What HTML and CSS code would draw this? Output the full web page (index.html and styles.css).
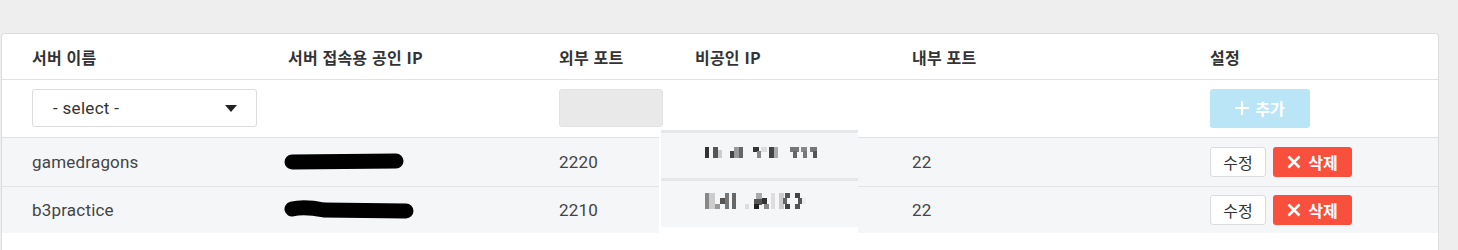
FILE: index.html
```html
<!DOCTYPE html>
<html lang="ko">
<head>
    <meta charset="UTF-8">
    <title>서버 목록</title>
    <link rel="stylesheet" href="styles.css">
</head>
<body>
    <div class="server-card">
        <div class="row head-row">
            <div>서버 이름</div>
            <div>서버 접속용 공인 IP</div>
            <div>외부 포트</div>
            <div>비공인 IP</div>
            <div>내부 포트</div>
            <div>설정</div>
        </div>

        <div class="row filter-row">
            <div>
                <div class="select-box">
                    <span>- select -</span>
                    <span class="caret"></span>
                </div>
            </div>
            <div></div>
            <div><div class="port-input"></div></div>
            <div></div>
            <div></div>
            <div>
                <button class="add-btn">
                    <svg width="14" height="14" viewBox="0 0 14 14"><path d="M7 0v14M0 7h14" stroke="#fff" stroke-width="2.2"/></svg>
                    추가
                </button>
            </div>
        </div>

        <div class="row data-row">
            <div>gamedragons</div>
            <div>
                <svg class="redact" width="124" height="20" viewBox="0 0 124 20"><path d="M8 10 L112 9" stroke="#000" stroke-width="15" stroke-linecap="round"/></svg>
            </div>
            <div>2220</div>
            <div></div>
            <div>22</div>
            <div class="actions">
                <button class="edit-btn">수정</button>
                <button class="del-btn">
                    <svg width="14" height="14" viewBox="0 0 14 14"><path d="M1.5 1.5l11 11M12.5 1.5l-11 11" stroke="#fff" stroke-width="2.6"/></svg>
                    삭제
                </button>
            </div>
        </div>

        <div class="row data-row last">
            <div>b3practice</div>
            <div>
                <svg class="redact" width="132" height="22" viewBox="0 0 132 22"><path d="M8 10 Q20 7 40 11 L122 12" stroke="#000" stroke-width="15" stroke-linecap="round" fill="none"/></svg>
            </div>
            <div>2210</div>
            <div></div>
            <div>22</div>
            <div class="actions">
                <button class="edit-btn">수정</button>
                <button class="del-btn">
                    <svg width="14" height="14" viewBox="0 0 14 14"><path d="M1.5 1.5l11 11M12.5 1.5l-11 11" stroke="#fff" stroke-width="2.6"/></svg>
                    삭제
                </button>
            </div>
        </div>

        <!-- 비공인 IP 가림 이미지 -->
        <div class="mask">
            <div class="mask-line"></div>
            <div class="mask-row">
                <svg width="120" height="14" viewBox="0 0 120 14">
                    <rect x="0" y="1" width="4" height="11" fill="#333"/>
                    <rect x="8" y="1" width="5" height="11" fill="#555"/>
                    <rect x="13" y="4" width="4" height="8" fill="#ccc"/>
                    <rect x="25" y="5" width="4" height="7" fill="#444"/>
                    <rect x="29" y="1" width="5" height="11" fill="#999"/>
                    <rect x="34" y="1" width="4" height="11" fill="#666"/>
                    <rect x="48" y="1" width="6" height="5" fill="#333"/>
                    <rect x="52" y="5" width="4" height="7" fill="#888"/>
                    <rect x="56" y="1" width="6" height="5" fill="#ddd"/>
                    <rect x="64" y="1" width="5" height="11" fill="#444"/>
                    <rect x="69" y="1" width="4" height="11" fill="#aaa"/>
                    <rect x="85" y="1" width="9" height="5" fill="#777"/>
                    <rect x="88" y="5" width="4" height="7" fill="#666"/>
                    <rect x="96" y="1" width="6" height="5" fill="#888"/>
                    <rect x="98" y="5" width="4" height="7" fill="#777"/>
                    <rect x="105" y="1" width="7" height="5" fill="#777"/>
                    <rect x="108" y="5" width="4" height="7" fill="#555"/>
                </svg>
            </div>
            <div class="mask-line"></div>
            <div class="mask-row">
                <svg width="120" height="18" viewBox="0 0 120 18">
                    <rect x="0" y="1" width="4" height="16" fill="#888"/>
                    <rect x="4" y="1" width="6" height="16" fill="#ccc"/>
                    <rect x="10" y="12" width="5" height="5" fill="#999"/>
                    <rect x="15" y="6" width="5" height="6" fill="#555"/>
                    <rect x="20" y="1" width="4" height="16" fill="#777"/>
                    <rect x="27" y="1" width="4" height="16" fill="#666"/>
                    <rect x="40" y="12" width="4" height="5" fill="#ddd"/>
                    <rect x="51" y="1" width="6" height="6" fill="#aaa"/>
                    <rect x="49" y="7" width="8" height="6" fill="#555"/>
                    <rect x="49" y="12" width="5" height="5" fill="#222"/>
                    <rect x="57" y="6" width="5" height="6" fill="#333"/>
                    <rect x="59" y="12" width="5" height="5" fill="#888"/>
                    <rect x="66" y="1" width="4" height="16" fill="#ddd"/>
                    <rect x="74" y="1" width="5" height="16" fill="#ccc"/>
                    <rect x="80" y="1" width="5" height="5" fill="#555"/>
                    <rect x="80" y="12" width="5" height="5" fill="#444"/>
                    <rect x="78" y="6" width="4" height="6" fill="#666"/>
                    <rect x="90" y="1" width="5" height="5" fill="#444"/>
                    <rect x="93" y="6" width="4" height="6" fill="#555"/>
                    <rect x="90" y="12" width="5" height="5" fill="#555"/>
                    <rect x="97" y="6" width="4" height="6" fill="#eee"/>
                </svg>
            </div>
            <div class="mask-bottom"></div>
        </div>
    </div>
</body>
</html>
```

FILE: styles.css
```css
* {
    margin: 0;
    padding: 0;
    box-sizing: border-box;
}

body {
    background: #eeeeee;
    font-family: Roboto, 'Noto Sans CJK KR', sans-serif;
    color: #333;
    overflow: hidden;
}

.server-card {
    position: relative;
    margin: 33px 0 0 1px;
    width: 1438px;
    height: 217px;
    background: #fff;
    border: 1px solid #dddddd;
    border-bottom: none;
    border-radius: 4px 4px 0 0;
}

.row {
    display: grid;
    grid-template-columns: 256px 271px 136px 217px 298px 1fr;
    align-items: center;
    padding-left: 30px;
    border-bottom: 1px solid #e2e2e2;
}

.head-row {
    height: 46px;
    font-family: 'Noto Sans CJK KR', Roboto, sans-serif;
    font-size: 16px;
    font-weight: 700;
    color: #333;
    letter-spacing: 0.2px;
}

.filter-row {
    height: 58px;
    padding-bottom: 1px;
}

.select-box {
    display: flex;
    justify-content: space-between;
    align-items: center;
    width: 225px;
    height: 38px;
    padding: 0 19px 0 20px;
    border: 1px solid #dcdcdc;
    border-radius: 3px;
    font-size: 17px;
    letter-spacing: 0.3px;
    color: #333;
}

.caret {
    width: 0;
    height: 0;
    border-left: 6px solid transparent;
    border-right: 6px solid transparent;
    border-top: 7px solid #222;
}

.port-input {
    width: 104px;
    height: 38px;
    background: #e9e9e9;
    border: 1px solid #e2e2e2;
    border-radius: 3px;
}

.add-btn {
    display: flex;
    align-items: center;
    justify-content: center;
    gap: 6px;
    width: 100px;
    height: 39px;
    border: none;
    border-radius: 3px;
    background: #b9e5f7;
    color: #fff;
    font-family: 'Noto Sans CJK KR', sans-serif;
    font-size: 16px;
    font-weight: 700;
}

.data-row {
    height: 49px;
    background: #f5f6f8;
    font-size: 17px;
    letter-spacing: 0.2px;
    color: #444;
}

.data-row.last {
    height: 46px;
    border-bottom: none;
}

.redact {
    display: block;
    margin-left: -4px;
}

.actions {
    display: flex;
    gap: 7px;
}

.edit-btn,
.del-btn {
    height: 30px;
    border-radius: 3px;
    font-family: 'Noto Sans CJK KR', sans-serif;
    font-size: 16px;
}

.edit-btn {
    width: 56px;
    background: #fff;
    border: 1px solid #dcdcdc;
    color: #333;
}

.del-btn {
    display: flex;
    align-items: center;
    justify-content: center;
    gap: 7px;
    width: 79px;
    border: none;
    background: #f9503e;
    color: #fff;
    font-weight: 700;
}

.mask {
    position: absolute;
    left: 657px;
    top: 95px;
    width: 199px;
    height: 104px;
    background: #fff;
    padding: 1px 0 0 2px;
}

.mask-line {
    height: 3px;
    background: #e6e7e9;
}

.mask-row {
    height: 45px;
    background: #f5f6f8;
    padding: 13px 0 0 44px;
}

.mask-row + .mask-line + .mask-row {
    height: 46px;
    padding-top: 11px;
}

.mask-row svg {
    display: block;
}
```
